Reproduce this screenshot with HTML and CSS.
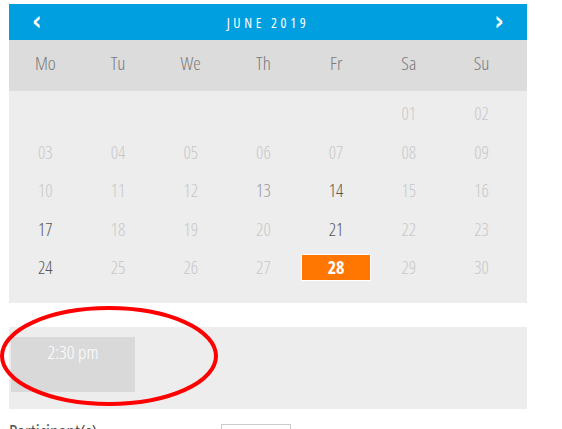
FILE: index.html
```html
<!DOCTYPE html>
<html lang="en">
<head>
  <meta charset="UTF-8" />
  <title>Booking</title>
  <meta name="viewport" content="width=device-width, initial-scale=1.0" />
  <link rel="stylesheet" href="styles.css">
</head>
<body>
  <!-- calendar -->
  <div class="calendar">
    <div class="cal-head">
      <span class="nav">&#8249;</span>
      <span class="month">JUNE 2019</span>
      <span class="nav">&#8250;</span>
    </div>
    <div class="weekdays">
      <span>Mo</span><span>Tu</span><span>We</span><span>Th</span><span>Fr</span><span>Sa</span><span>Su</span>
    </div>
    <div class="days">
      <span></span><span></span><span></span><span></span><span></span>
      <span>01</span><span>02</span>
      <span>03</span><span>04</span><span>05</span><span>06</span><span>07</span><span>08</span><span>09</span>
      <span>10</span><span>11</span><span>12</span><span class="mid">13</span><span class="on">14</span><span>15</span><span>16</span>
      <span class="on">17</span><span>18</span><span>19</span><span>20</span><span class="on">21</span><span>22</span><span>23</span>
      <span class="on">24</span><span>25</span><span>26</span><span>27</span><span class="on"><b class="picked">28</b></span><span>29</span><span>30</span>
    </div>
  </div>

  <!-- times -->
  <div class="times">
    <button class="slot">2:30 pm</button>
    <svg class="circle" width="224" height="108" viewBox="0 0 224 108">
      <ellipse cx="111" cy="52" rx="107" ry="48" fill="none" stroke="#ff0000" stroke-width="4" />
    </svg>
  </div>

  <div class="field">
    <label>Participant(s)</label>
    <input type="text" class="count">
  </div>
</body>
</html>
```

FILE: styles.css
```css
/* page */
body {
  margin: 0;
  padding: 4px 9px;
  background: #ffffff;
  font-family: "Open Sans", "Lato", sans-serif;
  font-weight: 300;
  font-stretch: 75%;
  width: 518px;
}

.calendar {
  width: 518px;
}

.cal-head {
  height: 36px;
  background-color: #009fe0;
  color: #ffffff;
  display: flex;
  align-items: center;
  justify-content: space-between;
  padding: 0 23px;
  box-sizing: border-box;
}

.cal-head .nav {
  font-family: "DejaVu Sans", sans-serif;
  font-weight: bold;
  font-size: 26px;
  line-height: 1;
  margin-top: -3px;
}

.cal-head .month {
  font-size: 14px;
  letter-spacing: 3.6px;
  font-weight: 400;
}

.weekdays {
  height: 51px;
  background-color: #dcdcdc;
  display: grid;
  grid-template-columns: repeat(7, 72.7px);
  align-items: center;
  color: #7a7a7a;
  font-size: 19px;
  padding-bottom: 5px;
  box-sizing: border-box;
}

.weekdays span,
.days span {
  text-align: center;
}

.days {
  background-color: #ededed;
  display: grid;
  grid-template-columns: repeat(7, 72.7px);
  grid-auto-rows: 38.5px;
  align-items: center;
  padding: 3px 0 16px;
  color: #c8c8c8;
  font-size: 18px;
}

.days .on {
  color: #555555;
}

.days .mid {
  color: #9a9a9a;
}

.picked {
  display: block;
  width: 70px;
  height: 27px;
  line-height: 25px;
  margin: 0 auto;
  box-sizing: border-box;
  border: 1px solid #ffffff;
  background-color: #ff7700;
  color: #ffffff;
  font-weight: 700;
  font-size: 18px;
}

.times {
  position: relative;
  margin-top: 24px;
  height: 82px;
  background-color: #ededed;
  padding: 10px 2px;
  box-sizing: border-box;
}

.slot {
  width: 124px;
  height: 55px;
  border: none;
  background-color: #d9d9d9;
  color: #ffffff;
  font-family: "Open Sans", sans-serif;
  font-weight: 300;
  font-stretch: 75%;
  font-size: 19px;
  padding: 2px 0 0;
  display: flex;
  justify-content: center;
  align-items: flex-start;
}

.circle {
  position: absolute;
  left: -11px;
  top: -23px;
  pointer-events: none;
}

.field {
  display: flex;
  align-items: flex-start;
  margin-top: 10px;
  color: #555555;
  font-size: 19px;
  font-weight: 400;
}

.field label {
  width: 212px;
}

.count {
  width: 70px;
  height: 28px;
  box-sizing: border-box;
  border: 1px solid #cccccc;
  margin-top: 5px;
}
```
